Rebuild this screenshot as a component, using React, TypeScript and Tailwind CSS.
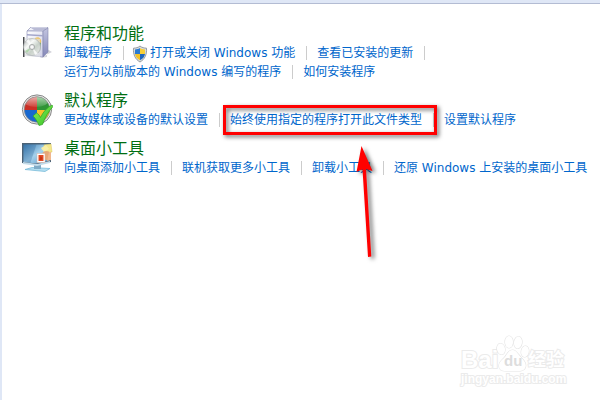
import type { ReactNode } from "react";

type PanelLink = {
  label: string;
  shield?: boolean;
};

type SectionProps = {
  title: string;
  icon: ReactNode;
  links: PanelLink[];
};

function ProgramsIcon() {
  return (
    <svg viewBox="0 0 32 32" className="mt-[3px] size-8 shrink-0" aria-hidden="true">
      <defs>
        <linearGradient id="boxFront" x1="0" y1="0" x2="1" y2="1">
          <stop offset="0" stopColor="#ffffff" />
          <stop offset="1" stopColor="#cfd0e8" />
        </linearGradient>
        <linearGradient id="boxSide" x1="0" y1="0" x2="0" y2="1">
          <stop offset="0" stopColor="#c3c5e0" />
          <stop offset="1" stopColor="#8487b8" />
        </linearGradient>
        <linearGradient id="disc" x1="0" y1="0" x2="1" y2="1">
          <stop offset="0" stopColor="#a9adad" />
          <stop offset=".35" stopColor="#f8faf8" />
          <stop offset=".6" stopColor="#c8d1c9" />
          <stop offset="1" stopColor="#efefef" />
        </linearGradient>
      </defs>
      <path d="M19 31 31 25 26 22v8z" fill="#d3d3da" />
      <path d="M6 4 10 0h17l-3 4z" fill="#f2f3fb" stroke="#8e90b5" strokeWidth=".7" />
      <path d="m10 1 3 2h11l2-2" fill="#b9bbd5" />
      <path d="M6 4h16v26L6 28z" fill="url(#boxFront)" stroke="#9799bd" strokeWidth=".7" />
      <path d="m22 4 5-3v24l-5 5z" fill="url(#boxSide)" stroke="#8083ac" strokeWidth=".6" />
      <path d="m6 7 16 1v1.500L6 8.500z" fill="#a4a7cb" />
      <path d="M14 11c4-2 7 1 6 5l-3 5-5-4z" fill="#eec66e" />
      <path d="m18 15 2 1-1 8-3 2z" fill="#7aa77d" />
      <path d="M2 10h1.500v20H2z" fill="#4b4d50" />
      <path d="m4 11 15 1v18L4 29z" fill="#dde0e1" opacity=".7" />
      <circle cx="11" cy="20" r="8.5" fill="url(#disc)" stroke="#a8acac" strokeWidth=".6" />
      <path d="m11 20-6-6 3-2zM11 20l6 7-3 1z" fill="#fff" opacity=".8" />
      <path d="m11 20-7 4 2 2z" fill="#a4cf9f" opacity=".8" />
      <circle cx="11" cy="20" r="2.6" fill="#e7e8e8" stroke="#929696" strokeWidth=".7" />
      <circle cx="11" cy="20" r="1" fill="#fff" />
    </svg>
  );
}

function DefaultsIcon() {
  return (
    <svg viewBox="0 0 32 32" className="mt-[3px] size-8 shrink-0" aria-hidden="true">
      <defs>
        <clipPath id="ball">
          <circle cx="16" cy="15.500" r="12.800" />
        </clipPath>
        <linearGradient id="gloss" x1="0" y1="0" x2="0" y2="1">
          <stop offset="0" stopColor="#fff" stopOpacity=".8" />
          <stop offset="1" stopColor="#fff" stopOpacity=".1" />
        </linearGradient>
        <linearGradient id="tick" x1="0" y1="0" x2="1" y2="1">
          <stop offset="0" stopColor="#8df05d" />
          <stop offset="1" stopColor="#2fbf22" />
        </linearGradient>
      </defs>
      <circle cx="16" cy="15.500" r="14.600" fill="#ececec" stroke="#777" strokeWidth=".9" />
      <g clipPath="url(#ball)">
        <path d="M2 2h14v14H2z" fill="#ca2f25" />
        <path d="M16 2h14v14H16z" fill="#2f9436" />
        <path d="M2 16h14v14H2z" fill="#1768cf" />
        <path d="M16 16h14v14H16z" fill="#f8c02a" />
        <ellipse cx="15" cy="6" rx="13" ry="7" fill="url(#gloss)" />
      </g>
      <circle cx="16" cy="15.500" r="12.800" fill="none" stroke="#888" strokeWidth=".7" />
      <path
        d="m12 22 3.500-3c2 1 3 2.500 4 4.500 3-6 6.500-10 11.500-12.500l1 1.500c-4.500 5-8 11-10.500 18l-3.500 1c-1.500-4-3.500-7-6-9.500z"
        fill="url(#tick)"
        stroke="#2fa322"
        strokeWidth=".7"
      />
    </svg>
  );
}

function GadgetsIcon() {
  return (
    <svg viewBox="0 0 32 32" className="mt-[3px] size-8 shrink-0" aria-hidden="true">
      <defs>
        <linearGradient id="screen" x1="0" y1="0" x2="1" y2="1">
          <stop offset="0" stopColor="#3b7bb0" />
          <stop offset=".5" stopColor="#a5d1ec" />
          <stop offset="1" stopColor="#5799c8" />
        </linearGradient>
      </defs>
      <path d="M4 27.500 11 25.500l18 1-5 3z" fill="#b4dff1" stroke="#6db4d5" strokeWidth=".7" />
      <path d="M13 21h7v6h-7z" fill="#7fabc6" />
      <path d="M1 1h29v19l-14 3-15-2z" fill="#4b6276" />
      <path d="M2.500 2.500h26v16l-13 3-13-1.500z" fill="url(#screen)" />
      <path d="M2.500 2.500h13l-6 18-7-1z" fill="#2b6397" opacity=".3" />
      <path d="m2 20 14 2 13-3v2l-13 3-14-2z" fill="#c3dcea" />
      <path d="m23 3 7-1 1 8-7 1z" fill="#f4e78b" stroke="#dbc75b" strokeWidth=".5" />
      <path d="m20 6 5-3 3 4-5 3z" fill="#f8efa6" />
      <circle cx="25.500" cy="13.500" r="4.500" fill="#e7a776" />
      <path d="M28 10h2v8l-4 1z" fill="#f0b78e" />
      <path d="M16 11.500h8v9h-8z" fill="#fff" stroke="#d9b2a0" strokeWidth=".5" />
      <path d="M17.500 13h5v6h-5z" fill="#e34a22" />
      <path d="m19.500 14 2 2-1 2h-2z" fill="#c73415" />
    </svg>
  );
}

function ShieldIcon() {
  return (
    <svg viewBox="0 0 16 16" className="size-4 shrink-0 overflow-visible" aria-hidden="true">
      <path
        d="M6 0c2 1.700 4 2 6.500 2.200C13 9 10.500 13.500 6 16 1.500 13.500-1 9-.5 2.200 2 2 4 1.700 6 0z"
        fill="#d8dde0"
        stroke="#81888d"
        strokeWidth=".8"
      />
      <path d="M6 2C4.500 3 3 3.400 1 3.500V8h5z" fill="#2a7ad2" />
      <path d="M6 2c1.500 1 3 1.400 5 1.500V8H6z" fill="#f8cf35" />
      <path d="M1 8h5v6.300C3.200 12.800 1.500 11 1 8z" fill="#f4c227" />
      <path d="M11 8H6v6.300c2.800-1.500 4.500-3.300 5-6.300z" fill="#1e66bd" />
    </svg>
  );
}

function Section({ title, icon, links }: SectionProps) {
  return (
    <section className="flex items-start gap-[11px]">
      {icon}
      <div className="min-w-0 flex-1">
        <h2 className="text-[16px] leading-5 text-[#006e12]">{title}</h2>
        <ul className="flex flex-wrap text-[12px] leading-[19px]">
          {links.map((link, i) => (
            <li key={link.label} className="flex items-center whitespace-nowrap">
              <a href="#" className="flex items-center text-[#0066cc] hover:underline">
                {link.shield && <ShieldIcon />}
                {link.label}
              </a>
              {i < links.length - 1 && (
                <span className="mr-[10px] mb-px ml-[11px] h-[14px] w-px bg-[#cccccc]" />
              )}
            </li>
          ))}
        </ul>
      </div>
    </section>
  );
}

/* Red frame and arrow that lie over the panel */
function Callout() {
  return (
    <div className="pointer-events-none absolute inset-0">
      <div className="absolute top-[105px] left-[223px] h-[30px] w-[214px] border-3 border-[#ff0000] drop-shadow-[2px_2px_2px_rgba(0,0,0,0.6)]" />
      <svg
        viewBox="0 0 30 120"
        className="absolute top-[142px] left-[350px] h-[120px] w-[30px] overflow-visible drop-shadow-[3px_2px_2px_rgba(0,0,0,0.55)]"
        aria-hidden="true"
      >
        <path d="M11.500 4 22.500 29 16 27 21.300 114.500 18 115 12.500 27.200 6.500 30z" fill="#ff0000" />
      </svg>
    </div>
  );
}

function Watermark() {
  return (
    <div className="pointer-events-none absolute right-[31px] bottom-[13px] w-[108px] font-['Liberation_Sans','Noto_Sans_CJK_SC',sans-serif] font-bold text-white [-webkit-text-stroke:2px_#ebebeb] [paint-order:stroke]">
      <div className="flex h-[38px] items-end">
        <span className="w-[36px] text-[24px] leading-[24px]">Bai</span>
        <span className="relative h-[38px] w-[31px] shrink-0">
          <svg viewBox="0 0 31 38" className="absolute inset-0 overflow-visible" aria-hidden="true">
            <g fill="#fff" stroke="#e4e4e4" strokeWidth="1.200">
              <ellipse cx="4" cy="15" rx="4" ry="5.500" transform="rotate(-12 4 15)" />
              <ellipse cx="12" cy="8" rx="4" ry="6" />
              <ellipse cx="21" cy="8.500" rx="4" ry="6" transform="rotate(8 21 8.500)" />
              <ellipse cx="28" cy="17.500" rx="3.800" ry="5.500" transform="rotate(10 28 17.500)" />
              <path d="M15.500 16c4 0 6 5 9 8s5 6 4 9c-1 4-5 4-8 4H9c-4 0-7-1-7-5s3-6 5-8c3-3 4-8 8.500-8z" />
            </g>
          </svg>
          <span className="absolute bottom-px left-[7px] text-[15px] leading-[20px] text-[#dddddd] [-webkit-text-stroke:0]">
            du
          </span>
        </span>
        <span className="text-[18px] leading-[24px] whitespace-nowrap">经验</span>
      </div>
      <div className="text-[12px] leading-[15px] whitespace-nowrap">jingyan.baidu.com</div>
    </div>
  );
}

export default function App() {
  return (
    <div className="relative flex min-h-screen flex-col bg-[#dfe7f6] font-['DejaVu_Sans','Noto_Sans_CJK_SC',sans-serif]">
      <div className="h-1 border-b border-[#b3bcd3]" />
      <main className="ml-0.5 flex flex-1 flex-col gap-[9px] bg-white pt-5 pl-[19px]">
        <Section
          title="程序和功能"
          icon={<ProgramsIcon />}
          links={[
            { label: "卸载程序" },
            { label: "打开或关闭 Windows 功能", shield: true },
            { label: "查看已安装的更新" },
            { label: "运行为以前版本的 Windows 编写的程序" },
            { label: "如何安装程序" },
          ]}
        />
        <Section
          title="默认程序"
          icon={<DefaultsIcon />}
          links={[
            { label: "更改媒体或设备的默认设置" },
            { label: "始终使用指定的程序打开此文件类型" },
            { label: "设置默认程序" },
          ]}
        />
        <Section
          title="桌面小工具"
          icon={<GadgetsIcon />}
          links={[
            { label: "向桌面添加小工具" },
            { label: "联机获取更多小工具" },
            { label: "卸载小工具" },
            { label: "还原 Windows 上安装的桌面小工具" },
          ]}
        />
      </main>
      <Callout />
      <Watermark />
    </div>
  );
}
